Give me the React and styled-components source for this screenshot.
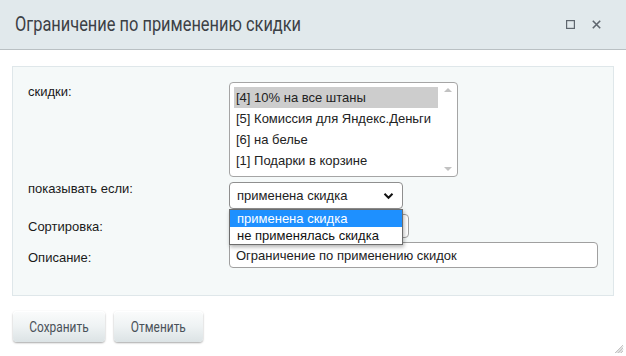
import React from 'react';
import styled, { createGlobalStyle } from 'styled-components';

const GlobalStyle = createGlobalStyle`
  html, body {
    margin: 0;
    padding: 0;
    background: #fff;
  }
  body {
    width: 626px;
    height: 356px;
    overflow: hidden;
    font-family: "Liberation Sans", Arial, sans-serif;
  }
`;

const Dialog = styled.div`
  position: relative;
  width: 626px;
  height: 356px;
  box-sizing: border-box;
  background: #fff;
  display: flex;
  flex-direction: column;
`;

const Header = styled.div`
  height: 49px;
  background: #e1e9ec;
  border-bottom: 1px solid #b9c0c3;
  display: flex;
  align-items: center;
  padding: 0 25px 0 15px;
`;

const Title = styled.div`
  flex: 1;
  font-family: Roboto, "Liberation Sans", sans-serif;
  font-size: 20px;
  color: #3c4045;
  margin-top: -1px;
  white-space: nowrap;
`;

/* the original uses a condensed face; squeeze Roboto to match */
const Narrow = styled.span`
  display: inline-block;
  transform: scaleX(${p => p.$k});
  transform-origin: ${p => p.$origin || 'left'} center;
`;

const WinButtons = styled.div`
  display: flex;
  gap: 17px;
  align-items: center;
`;

const IconBtn = styled.span`
  width: 9px;
  height: 9px;
  display: flex;
  align-items: center;
  justify-content: center;
`;

const Body = styled.div`
  padding: 16px 12px 0 12px;
`;

const Panel = styled.div`
  height: 230px;
  box-sizing: border-box;
  background: #f5f9f9;
  border: 1px solid #dfe7ea;
  padding: 15px 16px 0 15px;
  display: grid;
  grid-template-columns: 201px 1fr;
  align-items: start;
  align-content: start;
`;

const Label = styled.div`
  font-size: 13px;
  line-height: 15px;
  color: #1a1a1a;
  padding-top: ${p => p.$top || 0}px;
`;

const Field = styled.div`
  position: relative;
  margin-top: ${p => p.$mt || 0}px;
`;

const ListBox = styled.div`
  width: 229px;
  height: 95px;
  box-sizing: border-box;
  border: 1px solid #a5a5a5;
  border-radius: 4px;
  background: #fff;
  display: flex;
  padding: 4px 0 4px 4px;
`;

const Options = styled.div`
  flex: 1;
  display: flex;
  flex-direction: column;
`;

const Option = styled.div`
  height: 21px;
  line-height: 21px;
  padding-left: 2px;
  font-size: 13px;
  color: #222;
  white-space: nowrap;
  background: ${p => (p.$selected ? '#cdcdcd' : 'transparent')};
`;

const Scroll = styled.div`
  width: 19px;
  margin-top: -3px;
  margin-bottom: -3px;
  display: flex;
  flex-direction: column;
  justify-content: space-between;
  align-items: center;
  padding: 4px 0;
`;

const Arrow = styled.div`
  width: 0;
  height: 0;
  border-left: 4px solid transparent;
  border-right: 4px solid transparent;
  ${p => (p.$down ? 'border-top: 4px solid #c2c2c2;' : 'border-bottom: 4px solid #c2c2c2;')}
`;

const Select = styled.div`
  width: 174px;
  height: 27px;
  box-sizing: border-box;
  border: 1px solid #8f8f8f;
  border-radius: 4px;
  background: #fff;
  display: flex;
  align-items: center;
  padding: 0 8px 0 7px;
  font-size: 13px;
  color: #222;
`;

const SelectText = styled.span`
  flex: 1;
`;

const Menu = styled.div`
  position: absolute;
  left: 0;
  top: 27px;
  width: 174px;
  box-sizing: border-box;
  border: 1px solid #6d6d6d;
  background: #fff;
  box-shadow: 1px 2px 4px rgba(0, 0, 0, 0.3);
  z-index: 5;
`;

const MenuItem = styled.div`
  height: 17px;
  line-height: 17px;
  padding-left: 7px;
  font-size: 13px;
  color: ${p => (p.$active ? '#fff' : '#111')};
  background: ${p => (p.$active ? '#1e90ff' : '#fff')};
`;

const Input = styled.div`
  width: ${p => p.$w}px;
  height: ${p => p.$h}px;
  box-sizing: border-box;
  border: 1px solid #a0a0a0;
  border-radius: 4px;
  background: #fff;
  padding: 0 6px;
  display: flex;
  align-items: center;
  font-size: 13px;
  color: #222;
`;

const Footer = styled.div`
  display: flex;
  gap: 9px;
  padding: 15px 0 0 13px;
`;

const Button = styled.button`
  width: ${p => p.$w}px;
  height: 31px;
  padding: 0;
  border: none;
  border-radius: 4px;
  background: linear-gradient(to bottom, #fbfcfc 0%, #eef2f3 50%, #dce3e5 100%);
  box-shadow: 0 1px 2px rgba(0, 0, 0, 0.35), inset 0 1px 0 #fff;
  font-family: Roboto, "Liberation Sans", sans-serif;
  font-size: 14px;
  color: #4a5159;
  cursor: pointer;
`;

const Grip = styled.svg`
  position: absolute;
  right: 2px;
  bottom: 2px;
`;

const WinSquare = () => (
  <svg width="9" height="9" viewBox="0 0 9 9">
    <rect x="0.6" y="0.6" width="7.8" height="7.8" fill="none" stroke="#5e666e" strokeWidth="1.2" />
  </svg>
);

const WinClose = () => (
  <svg width="9" height="9" viewBox="0 0 9 9">
    <path d="M0.8 0.8 L8.2 8.2 M8.2 0.8 L0.8 8.2" stroke="#5e666e" strokeWidth="1.6" />
  </svg>
);

const discounts = [
  '[4] 10% на все штаны',
  '[5] Комиссия для Яндекс.Деньги',
  '[6] на белье',
  '[1] Подарки в корзине',
];

export default function App() {
  return (
    <>
      <GlobalStyle />
      <Dialog>
        <Header>
          <Title>
            <Narrow $k={0.82}>Ограничение по применению скидки</Narrow>
          </Title>
          <WinButtons>
            <IconBtn><WinSquare /></IconBtn>
            <IconBtn><WinClose /></IconBtn>
          </WinButtons>
        </Header>
        <Body>
          <Panel>
            <Label $top={2}>скидки:</Label>
            <Field>
              <ListBox>
                <Options>
                  {discounts.map((d, i) => (
                    <Option key={d} $selected={i === 0}>{d}</Option>
                  ))}
                </Options>
                <Scroll>
                  <Arrow />
                  <Arrow $down />
                </Scroll>
              </ListBox>
            </Field>

            <Label $top={4}>показывать если:</Label>
            <Field $mt={5}>
              <Select>
                <SelectText>применена скидка</SelectText>
                <svg width="11" height="8" viewBox="0 0 11 8">
                  <path d="M1.5 1.8 L5.5 5.8 L9.5 1.8" fill="none" stroke="#111" strokeWidth="2" />
                </svg>
              </Select>
              <Menu>
                <MenuItem $active>применена скидка</MenuItem>
                <MenuItem>не применялась скидка</MenuItem>
              </Menu>
            </Field>

            <Label $top={10}>Сортировка:</Label>
            <Field $mt={5}>
              <Input $w={180} $h={24} />
            </Field>

            <Label $top={12}>Описание:</Label>
            <Field $mt={4}>
              <Input $w={369} $h={26}>Ограничение по применению скидок</Input>
            </Field>
          </Panel>
        </Body>
        <Footer>
          <Button $w={92}><Narrow $k={0.85} $origin="center">Сохранить</Narrow></Button>
          <Button $w={89}><Narrow $k={0.85} $origin="center">Отменить</Narrow></Button>
        </Footer>
        <Grip width="10" height="10" viewBox="0 0 10 10">
          <path d="M9 1 L1 9 M9 4 L4 9 M9 7 L7 9 M9 2.5 L2.5 9 M9 5.5 L5.5 9" stroke="#b5b5b5" strokeWidth="0.8" />
        </Grip>
      </Dialog>
    </>
  );
}
